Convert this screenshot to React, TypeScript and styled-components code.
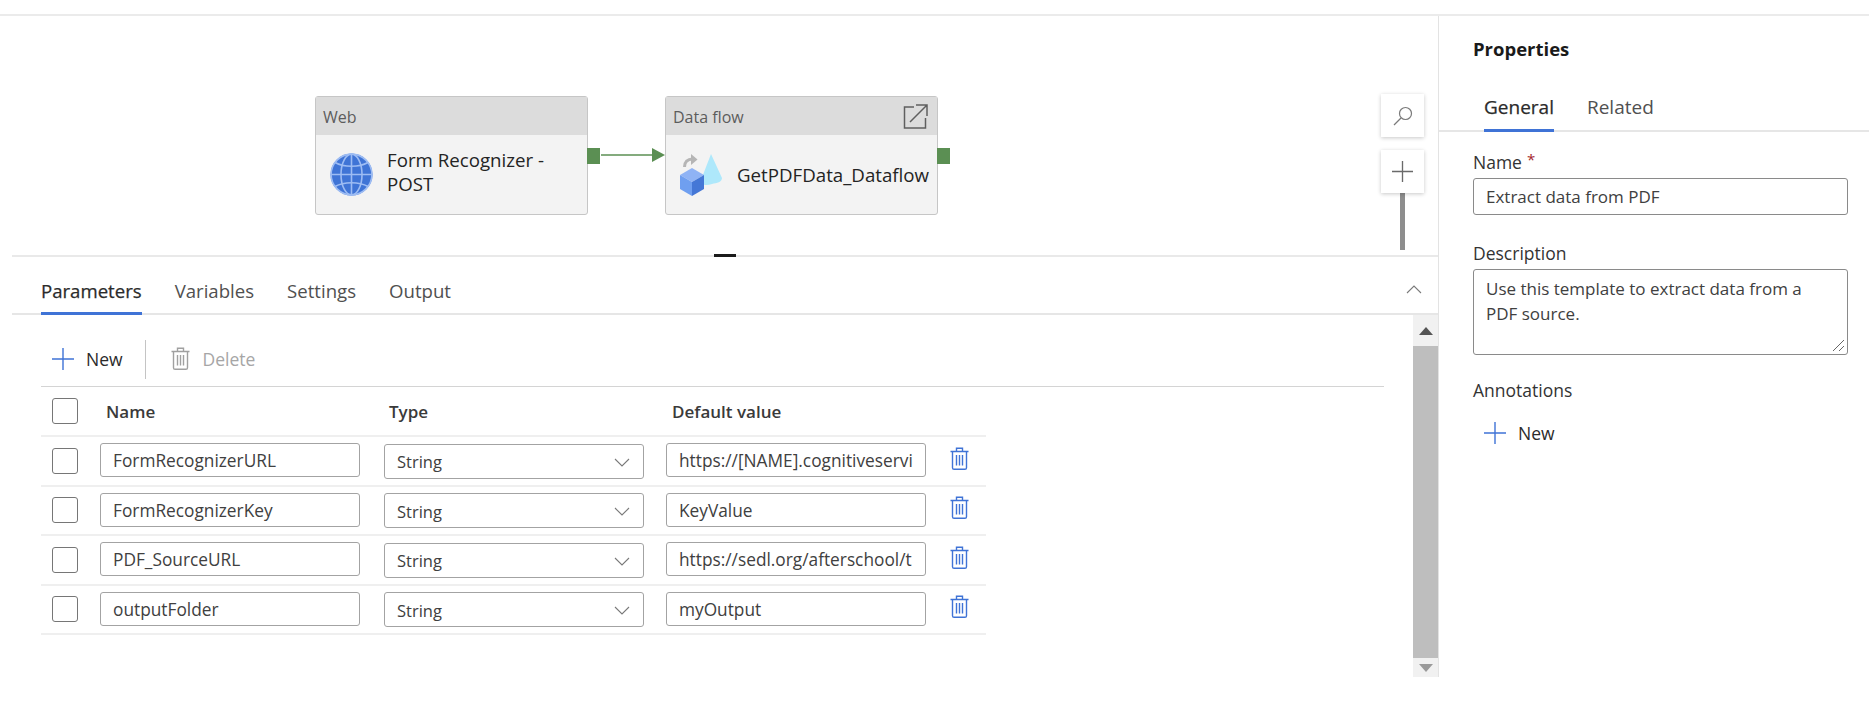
import React from "react";
import styled, { createGlobalStyle } from "styled-components";

const Global = createGlobalStyle`
  html, body { margin: 0; padding: 0; background: #fff; }
  body { font-family: "Open Sans", "Noto Sans", "Liberation Sans", sans-serif; color: #323130; overflow: hidden; }
  * { box-sizing: border-box; }
`;

const Page = styled.div`
  width: 1869px;
  height: 708px;
  display: flex;
  flex-direction: column;
`;
const TopStrip = styled.div`
  height: 16px;
  flex: none;
  border-bottom: 2px solid #ebebeb;
`;
const Main = styled.div`
  height: 661px;
  flex: none;
  display: flex;
`;
const LeftColumn = styled.div`
  width: 1439px;
  flex: none;
  display: flex;
  flex-direction: column;
  border-right: 1px solid #e3e3e3;
`;
const Canvas = styled.div`
  position: relative;
  height: 239px;
  flex: none;
`;
const Node = styled.div<{ $x: number }>`
  position: absolute;
  left: ${p => p.$x}px;
  top: 80px;
  width: 273px;
  height: 119px;
  background: #f3f3f3;
  border: 1px solid #c6c6c6;
  border-radius: 3px;
  display: flex;
  flex-direction: column;
`;
const NodeHeader = styled.div`
  height: 38px;
  flex: none;
  background: #dcdcdc;
  display: flex;
  align-items: center;
  justify-content: space-between;
  padding: 2px 9px 0 7px;
  font-size: 16px;
  color: #5c5c5c;
`;
const HeaderIcon = styled.span`
  display: flex;
  margin-top: -2px;
`;
const NodeBody = styled.div<{ $gap: number; $pad: number }>`
  flex: 1;
  display: flex;
  align-items: center;
  gap: ${p => p.$gap}px;
  padding-left: ${p => p.$pad}px;
`;
const NodeTitle = styled.div<{ $lift?: number }>`
  font-size: 18.7px;
  line-height: 24px;
  margin-top: ${p => -(p.$lift ?? 0)}px;
  color: #242424;
  white-space: nowrap;
`;
const Port = styled.div`
  position: absolute;
  left: 100%;
  top: 51px;
  width: 13px;
  height: 16px;
  background: #5b8f53;
`;
const Connector = styled.svg`
  position: absolute;
  left: 601px;
  top: 131px;
`;
const ZoomButton = styled.div<{ $top: number }>`
  position: absolute;
  left: 1381px;
  top: ${p => p.$top}px;
  width: 43px;
  height: 43px;
  background: #fff;
  box-shadow: 0 1px 4px rgba(0, 0, 0, 0.22);
  display: flex;
  align-items: center;
  justify-content: center;
`;
const SliderTrack = styled.div`
  position: absolute;
  left: 1400px;
  top: 177px;
  width: 5px;
  height: 57px;
  background: #8e8e8e;
`;
const Divider = styled.div`
  position: relative;
  height: 2px;
  flex: none;
  margin-left: 12px;
  background: #e9e9e9;
`;
const DragHandle = styled.div`
  position: absolute;
  left: 702px;
  top: -1px;
  width: 22px;
  height: 3px;
  background: #1b1b1b;
`;
const TabBar = styled.div`
  height: 58px;
  flex: none;
  margin-left: 12px;
  padding: 0 16px 0 29px;
  display: flex;
  align-items: flex-end;
  gap: 33px;
  border-bottom: 2px solid #e6e6e6;
`;
const Tab = styled.div<{ $active?: boolean }>`
  position: relative;
  height: 43px;
  font-size: 18.6px;
  line-height: 41px;
  color: ${p => (p.$active ? "#2b2b2b" : "#505050")};
  ${p => p.$active && "-webkit-text-stroke: 0.25px #2b2b2b;"}
  &::after {
    content: "";
    display: ${p => (p.$active ? "block" : "none")};
    position: absolute;
    left: 0;
    right: 0;
    bottom: -2px;
    height: 3px;
    background: #3f73d6;
  }
`;
const TabSpacer = styled.div`
  flex: 1;
  align-self: center;
  display: flex;
  justify-content: flex-end;
  padding-top: 8px;
`;
const PanelBody = styled.div`
  flex: 1;
  min-height: 0;
  display: flex;
`;
const PanelContent = styled.div`
  flex: 1;
  padding: 25px 29px 0 41px;
`;
const Toolbar = styled.div`
  height: 39px;
  display: flex;
  align-items: center;
  margin-bottom: 7px;
  padding: 0 0 2px 11px;
`;
const ToolButton = styled.div<{ $disabled?: boolean }>`
  display: flex;
  align-items: center;
  font-size: 17.5px;
  color: ${p => (p.$disabled ? "#a6a6a6" : "#2b2b2b")};
`;
const ToolIcon = styled.span`
  display: flex;
  margin-right: 13px;
`;
const ToolSeparator = styled.div`
  width: 1px;
  height: 39px;
  margin: 2px 25px 0 22px;
  background: #c4c4c4;
`;
const GridTable = styled.div`
  border-top: 1px solid #d4d4d4;
`;
const HeaderRow = styled.div`
  display: grid;
  grid-template-columns: 59px 283px 283px 1fr;
  width: 945px;
  height: 50px;
  align-items: center;
  border-bottom: 2px solid #efefef;
  font-size: 17px;
  font-weight: 600;
  color: #3a3a3a;
`;
const HeaderCell = styled.div<{ $pad?: number }>`
  padding-left: ${p => p.$pad ?? 0}px;
`;
const Row = styled.div`
  display: grid;
  grid-template-columns: 59px 284px 282px 284px 1fr;
  width: 945px;
  height: 49.5px;
  align-items: center;
  border-bottom: 2px solid #efefef;
`;
const Checkbox = styled.div`
  width: 26px;
  height: 26px;
  margin-left: 11px;
  border: 1px solid #767676;
  border-radius: 3px;
  background: #fff;
`;
const Field = styled.div`
  width: 260px;
  height: 34px;
  margin-top: -1px;
  padding: 0 12px;
  border: 1.5px solid #a3a3a3;
  border-radius: 3px;
  font-size: 17.3px;
  line-height: 34px;
  color: #404040;
  white-space: nowrap;
  overflow: hidden;
`;
const SelectField = styled(Field)`
  display: flex;
  align-items: center;
  justify-content: space-between;
  height: 35px;
  padding: 2px 13px 0 12px;
  margin-top: 1px;
  font-size: 16.5px;
`;
const RowAction = styled.div`
  display: flex;
  margin-top: -5px;
`;
const Scrollbar = styled.div`
  width: 25px;
  flex: none;
  display: flex;
  flex-direction: column;
`;
const ScrollEnd = styled.div<{ $h: number }>`
  height: ${p => p.$h}px;
  flex: none;
  background: #f1f1f1;
  display: flex;
  align-items: center;
  justify-content: center;
`;
const ScrollThumb = styled.div`
  flex: 1;
  background: #bebebe;
`;
const Properties = styled.div`
  flex: 1;
  display: flex;
  flex-direction: column;
`;
const PropsTitle = styled.div`
  height: 68px;
  padding: 18px 0 0 34px;
  font-size: 18.5px;
  font-weight: 700;
  line-height: 30px;
  color: #1a1a1a;
`;
const PropsTabs = styled.div`
  height: 48px;
  padding-left: 45px;
  display: flex;
  gap: 33px;
  border-bottom: 2px solid #e6e6e6;
  align-items: flex-end;
`;
const PropsTab = styled(Tab)`
  height: 48px;
  font-size: 19px;
  line-height: 51px;
`;
const PropsBody = styled.div`
  padding: 18px 21px 0 34px;
  display: flex;
  flex-direction: column;
`;
const Label = styled.div<{ $top?: number }>`
  font-size: 17.5px;
  font-weight: 500;
  line-height: 24px;
  margin-top: ${p => p.$top ?? 0}px;
  color: #333;
`;
const Required = styled.span`
  color: #a4262c;
  margin-left: 5px;
  font-size: 15px;
  position: relative;
  top: -4px;
`;
const PropInput = styled.div`
  height: 37px;
  margin-top: 3px;
  padding: 0 12px;
  border: 1px solid #8a8a8a;
  border-radius: 3px;
  font-size: 17px;
  line-height: 35px;
  color: #404040;
`;
const PropArea = styled.div`
  position: relative;
  height: 86px;
  margin-top: 4px;
  padding: 6px 12px;
  border: 1px solid #8a8a8a;
  border-radius: 3px;
  font-size: 17px;
  line-height: 25px;
  color: #404040;
`;
const ResizeGrip = styled.svg`
  position: absolute;
  right: 2px;
  bottom: 2px;
`;
const AddRow = styled.div`
  margin: 19px 0 0 11px;
  display: flex;
  align-items: center;
  font-size: 17.5px;
  color: #2b2b2b;
`;

const Plus = ({ size = 22, color = "#3f73d6", mr = 12 }: { size?: number; color?: string; mr?: number }) => (
  <svg width={size} height={size} viewBox="0 0 22 22" style={{ marginRight: mr }} fill="none">
    <path d="M11 0v22M0 11h22" stroke={color} strokeWidth="1.4" />
  </svg>
);

const Trash = ({ color, w = 19, h = 23 }: { color: string; w?: number; h?: number }) => (
  <svg width={w} height={h} viewBox="0 0 19 23" fill="none" stroke={color} strokeWidth="1.4">
    <path d="M0.5 4.5h18M6.5 4.5V1.2h6v3.3" />
    <path d="M2.5 4.5v16.2a1.6 1.6 0 0 0 1.6 1.6h10.8a1.6 1.6 0 0 0 1.6-1.6V4.5" />
    <path d="M6.5 8v10.5M9.5 8v10.5M12.5 8v10.5" />
  </svg>
);

const Chevron = ({ up }: { up?: boolean }) => (
  <svg width="16" height="9" viewBox="0 0 16 9" fill="none">
    <path d={up ? "M1 8L8 1l7 7" : "M1 1l7 7 7-7"} stroke="#7a7a7a" strokeWidth="1.1" />
  </svg>
);

const Globe = () => (
  <svg width="43" height="43" viewBox="0 0 43 43" fill="none">
    <circle cx="21.5" cy="21.5" r="21" fill="#3f74d6" />
    <g stroke="#9dbcf3" strokeWidth="1.6">
      <circle cx="21.5" cy="21.5" r="20.4" />
      <ellipse cx="21.5" cy="21.5" rx="10.5" ry="20.4" />
      <path d="M21.5 1v41M1 21.5h41" />
      <path d="M5 9.5c9 5 24 5 33 0M5 33.5c9-5 24-5 33 0" />
    </g>
  </svg>
);

const DataflowIcon = () => (
  <svg width="44" height="44" viewBox="0 0 44 44" fill="none">
    <path d="M31 1L21 27c-1 5 5 6 11 4 5-1 10-2 10-6z" fill="#aee8fb" />
    <path d="M4.5 14c0-5 3-8 8-8" stroke="#b5b5b5" strokeWidth="3" />
    <path d="M11 1l6.5 5.5L11 12z" fill="#b5b5b5" />
    <path d="M12 15l12 7-12 7-12-7z" fill="#8fb3f5" />
    <path d="M0 22l12 7v14L0 36z" fill="#6f9ff0" />
    <path d="M24 22l-12 7v14l12-7z" fill="#4477d6" />
  </svg>
);

const ExternalLink = () => (
  <svg width="25" height="25" viewBox="0 0 25 25" fill="none" stroke="#5f5f5f" strokeWidth="1.5">
    <path d="M11 3H1.5v21h21v-10" />
    <path d="M7 18L24 1M13 1h11v11" />
  </svg>
);

const rows = [
  ["FormRecognizerURL", "https://[NAME].cognitiveservi"],
  ["FormRecognizerKey", "KeyValue"],
  ["PDF_SourceURL", "https://sedl.org/afterschool/t"],
  ["outputFolder", "myOutput"],
];

export default function App() {
  return (
    <Page>
      <Global />
      <TopStrip />
      <Main>
        <LeftColumn>
          <Canvas>
            <Node $x={315}>
              <NodeHeader>Web</NodeHeader>
              <NodeBody $gap={14} $pad={14}>
                <Globe />
                <NodeTitle $lift={5}>
                  Form Recognizer -<br />
                  POST
                </NodeTitle>
              </NodeBody>
              <Port />
            </Node>
            <Connector width="64" height="16" viewBox="0 0 64 16">
              <path d="M0 8h52" stroke="#5b8f53" strokeWidth="1.5" />
              <path d="M51 1l13 7-13 7z" fill="#5b8f53" />
            </Connector>
            <Node $x={665}>
              <NodeHeader>
                Data flow
                <HeaderIcon>
                  <ExternalLink />
                </HeaderIcon>
              </NodeHeader>
              <NodeBody $gap={13} $pad={14}>
                <DataflowIcon />
                <NodeTitle>GetPDFData_Dataflow</NodeTitle>
              </NodeBody>
              <Port />
            </Node>
            <ZoomButton $top={78}>
              <svg width="20" height="20" viewBox="0 0 20 20" fill="none" stroke="#7a7a7a" strokeWidth="1.2">
                <circle cx="12.5" cy="7.5" r="6" />
                <path d="M8 12l-7 7" />
              </svg>
            </ZoomButton>
            <SliderTrack />
            <ZoomButton $top={134}>
              <Plus size={21} color="#6a6a6a" mr={0} />
            </ZoomButton>
          </Canvas>
          <Divider>
            <DragHandle />
          </Divider>
          <TabBar>
            <Tab $active>Parameters</Tab>
            <Tab>Variables</Tab>
            <Tab>Settings</Tab>
            <Tab>Output</Tab>
            <TabSpacer>
              <Chevron up />
            </TabSpacer>
          </TabBar>
          <PanelBody>
            <PanelContent>
              <Toolbar>
                <ToolButton>
                  <Plus />
                  New
                </ToolButton>
                <ToolSeparator />
                <ToolButton $disabled>
                  <ToolIcon>
                    <Trash color="#a0a0a0" />
                  </ToolIcon>
                  Delete
                </ToolButton>
              </Toolbar>
              <GridTable>
                <HeaderRow>
                  <Checkbox />
                  <HeaderCell $pad={6}>Name</HeaderCell>
                  <HeaderCell $pad={6}>Type</HeaderCell>
                  <HeaderCell $pad={6}>Default value</HeaderCell>
                </HeaderRow>
                {rows.map(([name, value]) => (
                  <Row key={name}>
                    <Checkbox />
                    <Field>{name}</Field>
                    <SelectField>
                      String
                      <Chevron />
                    </SelectField>
                    <Field>{value}</Field>
                    <RowAction>
                      <Trash color="#3f73d6" />
                    </RowAction>
                  </Row>
                ))}
              </GridTable>
            </PanelContent>
            <Scrollbar>
              <ScrollEnd $h={31}>
                <svg width="14" height="8" viewBox="0 0 14 8">
                  <path d="M7 0l7 8H0z" fill="#555" />
                </svg>
              </ScrollEnd>
              <ScrollThumb />
              <ScrollEnd $h={19}>
                <svg width="14" height="8" viewBox="0 0 14 8">
                  <path d="M0 0h14L7 8z" fill="#9a9a9a" />
                </svg>
              </ScrollEnd>
            </Scrollbar>
          </PanelBody>
        </LeftColumn>
        <Properties>
          <PropsTitle>Properties</PropsTitle>
          <PropsTabs>
            <PropsTab $active>General</PropsTab>
            <PropsTab>Related</PropsTab>
          </PropsTabs>
          <PropsBody>
            <Label>
              Name<Required>*</Required>
            </Label>
            <PropInput>Extract data from PDF</PropInput>
            <Label $top={26}>Description</Label>
            <PropArea>
              Use this template to extract data from a<br />
              PDF source.
              <ResizeGrip width="13" height="13" viewBox="0 0 13 13" fill="none" stroke="#666" strokeWidth="1">
                <path d="M1 12L12 1M7 12l5-5" />
              </ResizeGrip>
            </PropArea>
            <Label $top={23}>Annotations</Label>
            <AddRow>
              <Plus />
              New
            </AddRow>
          </PropsBody>
        </Properties>
      </Main>
    </Page>
  );
}
